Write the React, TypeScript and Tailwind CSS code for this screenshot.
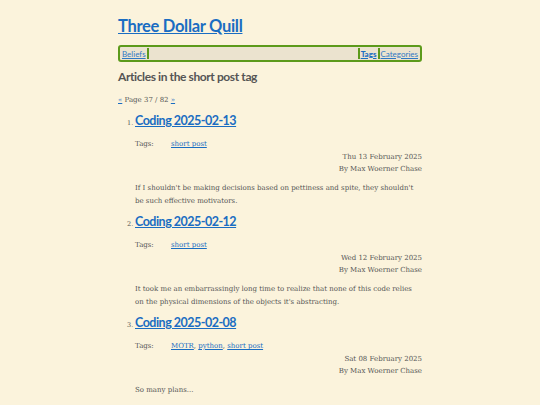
const posts = [
  {
    n: 1,
    title: "Coding 2025-02-13",
    tags: ["short post"],
    date: "Thu 13 February 2025",
    body: "If I shouldn't be making decisions based on pettiness and spite, they shouldn't be such effective motivators.",
  },
  {
    n: 2,
    title: "Coding 2025-02-12",
    tags: ["short post"],
    date: "Wed 12 February 2025",
    body: "It took me an embarrassingly long time to realize that none of this code relies on the physical dimensions of the objects it's abstracting.",
  },
  {
    n: 3,
    title: "Coding 2025-02-08",
    tags: ["MOTR", "python", "short post"],
    date: "Sat 08 February 2025",
    body: "So many plans...",
  },
]

const sans = "font-['Lato',sans-serif]"
const serif = "font-['DejaVu_Serif',serif]"

export default function App() {
  return (
    <div className="min-h-[405px] bg-[#fbf3dc] text-[#555]">
      <div className="mx-auto w-[304px] pt-[14px]">
        <a href="#" className={`${sans} text-[16.5px] font-bold leading-[22px] tracking-[-0.3px] text-[#1a6dc2] underline`}>
          Three Dollar Quill
        </a>

        <nav className={`${sans} mt-[7px] flex h-[17px] items-center rounded-[3px] border-2 border-[#5c9a1b] bg-[#ebe3cf] px-[2px] text-[8px] leading-none`}>
          <a href="#" className="text-[#2f78c4] underline">Beliefs</a>
          <span className="ml-[1px] h-[11px] w-[2px] bg-[#5c9a1b]" />
          <span className="flex-1" />
          <span className="mr-[1px] h-[11px] w-[2px] bg-[#5c9a1b]" />
          <a href="#" className="font-black text-[#1a6dc2] underline">Tags</a>
          <span className="mx-[1px] h-[11px] w-[2px] bg-[#5c9a1b]" />
          <a href="#" className="text-[#2f78c4] underline">Categories</a>
        </nav>

        <h2 className={`${sans} mt-[7px] text-[12px] font-bold leading-[16px] tracking-[-0.4px] text-[#555]`}>
          Articles in the short post tag
        </h2>

        <p className={`${serif} mt-[10px] text-[7px] leading-[10px]`}>
          <a href="#" className="text-[#1a6dc2] underline">«</a> Page 37 / 82{" "}
          <a href="#" className="text-[#1a6dc2] underline">»</a>
        </p>

        <ol className="mt-[7px]">
          {posts.map((p) => (
            <li key={p.n} className="pl-[17px]">
              <div className="flex items-baseline">
                <span className={`${serif} -ml-[8px] w-[8px] text-[6.5px]`}>{p.n}.</span>
                <a href="#" className={`${sans} text-[12.5px] font-bold leading-[18px] tracking-[-0.5px] text-[#1a6dc2] underline`}>
                  {p.title}
                </a>
              </div>
              <div className={`${serif} mt-[9px] flex text-[7px] leading-[10px]`}>
                <span className="w-[36px]">Tags:</span>
                <span>
                  {p.tags.map((t, i) => (
                    <span key={t}>
                      <a href="#" className="text-[#1a6dc2] underline">{t}</a>
                      {i < p.tags.length - 1 ? ", " : ""}
                    </span>
                  ))}
                </span>
              </div>
              <div className={`${serif} mt-[2px] text-right text-[7px] leading-[12px]`}>
                <div>{p.date}</div>
                <div>By Max Woerner Chase</div>
              </div>
              <p className={`${serif} mt-[7px] mb-[5px] pr-[8px] text-[7px] leading-[13px]`}>{p.body}</p>
            </li>
          ))}
        </ol>
      </div>
    </div>
  )
}
